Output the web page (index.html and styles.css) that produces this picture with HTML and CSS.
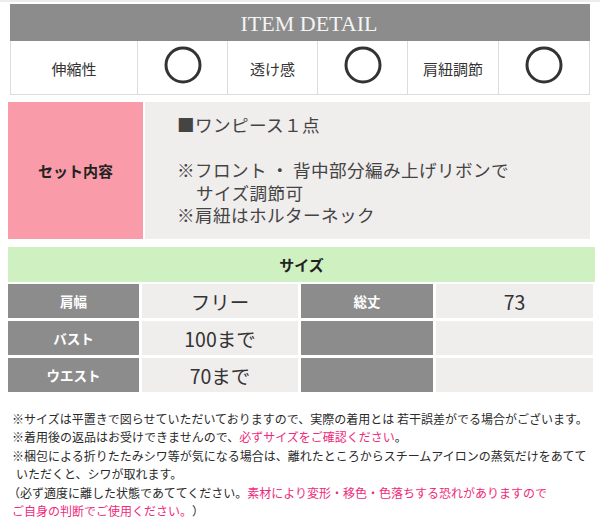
FILE: index.html
```html
<!DOCTYPE html>
<html lang="ja">
<head>
<meta charset="utf-8">
<link rel="stylesheet" href="styles.css">
</head>
<body>
<div class="topline"></div>
<section class="detail">
  <div class="detail-head">ITEM DETAIL</div>
  <div class="detail-row">
    <div class="cell">伸縮性</div>
    <div class="cell"><svg class="mark" width="38" height="38" viewBox="0 0 38 38"><circle cx="19" cy="19" r="17" fill="none" stroke="#333" stroke-width="3"/></svg></div>
    <div class="cell">透け感</div>
    <div class="cell"><svg class="mark" width="38" height="38" viewBox="0 0 38 38"><circle cx="19" cy="19" r="17" fill="none" stroke="#333" stroke-width="3"/></svg></div>
    <div class="cell">肩紐調節</div>
    <div class="cell"><svg class="mark" width="38" height="38" viewBox="0 0 38 38"><circle cx="19" cy="19" r="17" fill="none" stroke="#333" stroke-width="3"/></svg></div>
  </div>
</section>

<section class="set">
  <div class="set-label">セット内容</div>
  <div class="set-body">
    <p>■ワンピース１点</p>
    <p>&nbsp;</p>
    <p>※フロント<span class="dot">・</span>背中部分編み上げリボンで</p>
    <p class="indent">サイズ調節可</p>
    <p>※肩紐はホルターネック</p>
  </div>
</section>

<section class="size">
  <div class="size-head">サイズ</div>
  <div class="size-grid">
    <div class="lbl">肩幅</div><div class="val">フリー</div>
    <div class="lbl">総丈</div><div class="val">73</div>
    <div class="lbl">バスト</div><div class="val">100まで</div>
    <div class="lbl"></div><div class="val"></div>
    <div class="lbl">ウエスト</div><div class="val">70まで</div>
    <div class="lbl"></div><div class="val"></div>
  </div>
</section>

<section class="notes">
  <p>※サイズは平置きで図らせていただいておりますので、実際の着用とは 若干誤差がでる場合がございます。</p>
  <p>※着用後の返品はお受けできませんので、<span class="pink">必ずサイズをご確認ください</span>。</p>
  <p>※梱包による折りたたみシワ等が気になる場合は、離れたところからスチームアイロンの蒸気だけをあてて</p>
  <p class="sub">いただくと、シワが取れます。</p>
  <p class="paren">（必ず適度に離した状態であててください。<span class="pink">素材により変形・移色・色落ちする恐れがありますので</span></p>
  <p><span class="pink">ご自身の判断でご使用ください。</span>）</p>
</section>
</body>
</html>
```

FILE: styles.css
```css
* { box-sizing: border-box; }
html, body { margin: 0; padding: 0; background: #fff; }
body {
  width: 600px;
  font-family: "Noto Sans CJK JP", "Noto Sans", sans-serif;
  color: #333;
  text-spacing-trim: space-all;
}
p { margin: 0; }

.topline { height: 2px; background: #ececec; }

.detail { margin: 2px 0 0 10px; width: 580px; }
.detail-head {
  height: 37px;
  background: #8c8c8c;
  color: #f4f4f4;
  font-family: "Liberation Serif", serif;
  font-size: 22px;
  line-height: 39px;
  text-align: center;
  padding-left: 18px;
}
.detail-row {
  display: grid;
  grid-template-columns: 127px 90px 90px 90px 91px 91px;
  height: 54px;
  border-left: 1px solid #dcdcdc;
  border-bottom: 1px solid #dcdcdc;
}
.cell {
  border-right: 1px solid #dcdcdc;
  display: flex;
  align-items: center;
  justify-content: center;
  font-size: 15px;
  color: #333;
  padding-top: 2px;
}
.mark { display: block; margin-top: -8px; }

.set {
  display: grid;
  grid-template-columns: 135px 445px;
  column-gap: 2px;
  margin: 7px 0 0 8px;
  height: 137px;
}
.set-label {
  background: #f99ba9;
  display: flex;
  align-items: center;
  justify-content: center;
  font-weight: bold;
  font-size: 15px;
  color: #222;
}
.set-body {
  background: #f0eded;
  padding: 12px 0 0 32px;
  font-size: 17.6px;
  line-height: 22.5px;
  letter-spacing: 0.4px;
  color: #444;
  white-space: nowrap;
}
.set-body .indent { padding-left: 19px; }
.set-body .dot { padding: 0 4px; }

.size { margin: 8px 0 0 8px; width: 587px; }
.size-head {
  height: 35px;
  background: #cff0c0;
  display: flex;
  align-items: center;
  justify-content: center;
  font-weight: bold;
  font-size: 15px;
  color: #222;
}
.size-grid {
  margin-top: 2px;
  display: grid;
  grid-template-columns: 131px 156px 132px 157px;
  grid-auto-rows: 34px;
  gap: 3px 3px;
}
.lbl {
  background: #8c8c8c;
  color: #fff;
  font-weight: bold;
  font-size: 13.5px;
  display: flex;
  align-items: center;
  justify-content: center;
}
.val {
  background: #f0eded;
  color: #333;
  font-size: 19.5px;
  display: flex;
  align-items: center;
  justify-content: center;
}

.notes {
  margin: 18px 0 0 12px;
  font-size: 12px;
  line-height: 18.4px;
  color: #2a2a2a;
  white-space: nowrap;
}
.notes .sub { padding-left: 4px; }
.notes .paren { margin-left: -4px; }
.pink { color: #ee2a7b; }
```
